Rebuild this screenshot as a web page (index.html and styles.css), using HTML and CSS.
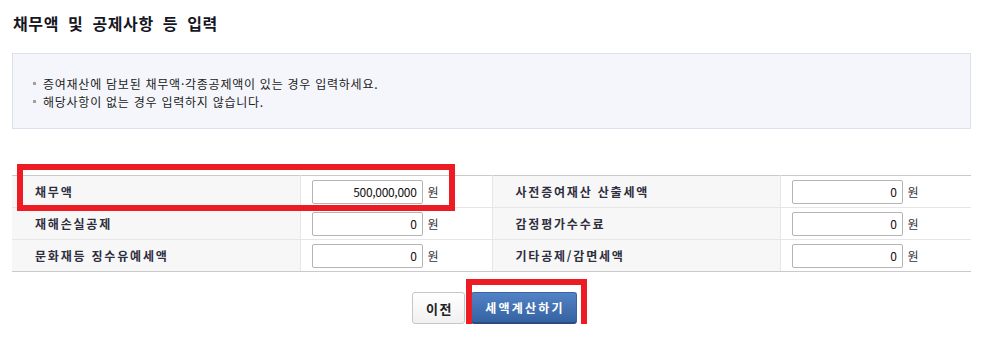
FILE: index.html
```html
<!DOCTYPE html>
<html lang="ko">
<head>
    <meta charset="UTF-8">
    <meta name="viewport" content="width=device-width, initial-scale=1.0">
    <title>채무액 및 공제사항 등 입력</title>
    <link rel="stylesheet" href="styles.css">
</head>
<body>
    <div class="page">
        <h2 class="title">채무액 및 공제사항 등 입력</h2>

        <div class="info-box">
            <ul>
                <li>증여재산에 담보된 채무액·각종공제액이 있는 경우 입력하세요.</li>
                <li>해당사항이 없는 경우 입력하지 않습니다.</li>
            </ul>
        </div>

        <table class="input-table">
            <colgroup>
                <col class="col-label">
                <col class="col-value">
                <col class="col-label">
                <col class="col-value2">
            </colgroup>
            <tr>
                <th>채무액</th>
                <td><input type="text" value="500,000,000"><span class="unit">원</span></td>
                <th>사전증여재산 산출세액</th>
                <td><input type="text" value="0"><span class="unit">원</span></td>
            </tr>
            <tr>
                <th>재해손실공제</th>
                <td><input type="text" value="0"><span class="unit">원</span></td>
                <th>감정평가수수료</th>
                <td><input type="text" value="0"><span class="unit">원</span></td>
            </tr>
            <tr>
                <th>문화재등 징수유예세액</th>
                <td><input type="text" value="0"><span class="unit">원</span></td>
                <th>기타공제/감면세액</th>
                <td><input type="text" value="0"><span class="unit">원</span></td>
            </tr>
        </table>

        <div class="btn-area">
            <button class="btn btn-prev">이전</button>
            <button class="btn btn-calc">세액계산하기</button>
        </div>

        <!-- annotation marks -->
        <div class="mark mark-debt"></div>
        <div class="mark mark-calc"></div>
    </div>
</body>
</html>
```

FILE: styles.css
```css
body { margin: 0; background: #fff; font-family: "Noto Sans CJK KR", "Noto Sans", sans-serif; color: #333; }
.page { position: relative; padding: 12px 12px 0 12px; width: 959px; }

.title { margin: 0 0 19px 1px; font-size: 16px; line-height: 22px; font-weight: bold; color: #16161f; letter-spacing: 0.6px; word-spacing: 4px; }

.info-box { border: 1px solid #dde2ea; background: #f4f6fb; height: 74px; box-sizing: content-box; }
.info-box ul { list-style: none; margin: 0; padding: 21px 0 0 20px; }
.info-box li { font-size: 12px; line-height: 18px; color: #222; letter-spacing: 0.75px; }
.info-box li::before { content: ""; display: inline-block; width: 3px; height: 3px; background: #a0a0a0; margin-right: 7px; vertical-align: middle; position: relative; top: -2px; }

.input-table { margin-top: 46px; width: 959px; border-collapse: collapse; table-layout: fixed; border-top: 1px solid #cacaca; border-bottom: 1px solid #cacaca; }
.col-label { width: 288px; }
.col-value { width: 192px; }
.col-value2 { width: 191px; }
.input-table th, .input-table td { height: 32px; padding: 0; border-bottom: 1px solid #e6e6e6; box-sizing: border-box; }
.input-table tr:last-child th, .input-table tr:last-child td { border-bottom: 1px solid #cacaca; }
.input-table th { background: #f7f7f7; text-align: left; padding-left: 23px; font-size: 12px; font-weight: bold; color: #2e2e3e; letter-spacing: 1.8px; }
.input-table td { border-left: 1px solid #e6e6e6; padding-left: 11px; font-size: 12px; }
.input-table th + td + th { border-left: 1px solid #e6e6e6; }
.input-table input { width: 111px; height: 24px; box-sizing: border-box; border: 1px solid #b4b4b4; border-radius: 2px; text-align: right; padding: 0 5px; font-family: "Noto Sans CJK KR", sans-serif; font-size: 12px; letter-spacing: -0.3px; color: #111; vertical-align: middle; }
.unit { margin-left: 5px; color: #333; vertical-align: middle; }

.btn-area { margin-top: 20px; text-align: center; padding-left: 6px; font-size: 0; }
.btn { height: 32px; border-radius: 3px; font-family: "Noto Sans CJK KR", sans-serif; font-size: 12px; font-weight: bold; cursor: pointer; vertical-align: top; }
.btn-prev { width: 53px; background: linear-gradient(#ffffff, #f0f0f0); border: 1px solid #c6c6c6; color: #222; margin-right: 6px; letter-spacing: 1.5px; padding: 0 0 0 2px; font-size: 13px; }
.btn-calc { width: 106px; background: linear-gradient(#5283c4, #3562a3); border: 1px solid #3a62a0; border-bottom: 2px solid #2a4b80; color: #fff; letter-spacing: 2.2px; padding: 0 0 0 2px; }

.mark { position: absolute; border: 6px solid #ed1c24; box-sizing: border-box; }
.mark-debt { left: 17px; top: 164px; width: 438px; height: 47px; }
.mark-calc { left: 466px; top: 279px; width: 121px; height: 54px; }
```
